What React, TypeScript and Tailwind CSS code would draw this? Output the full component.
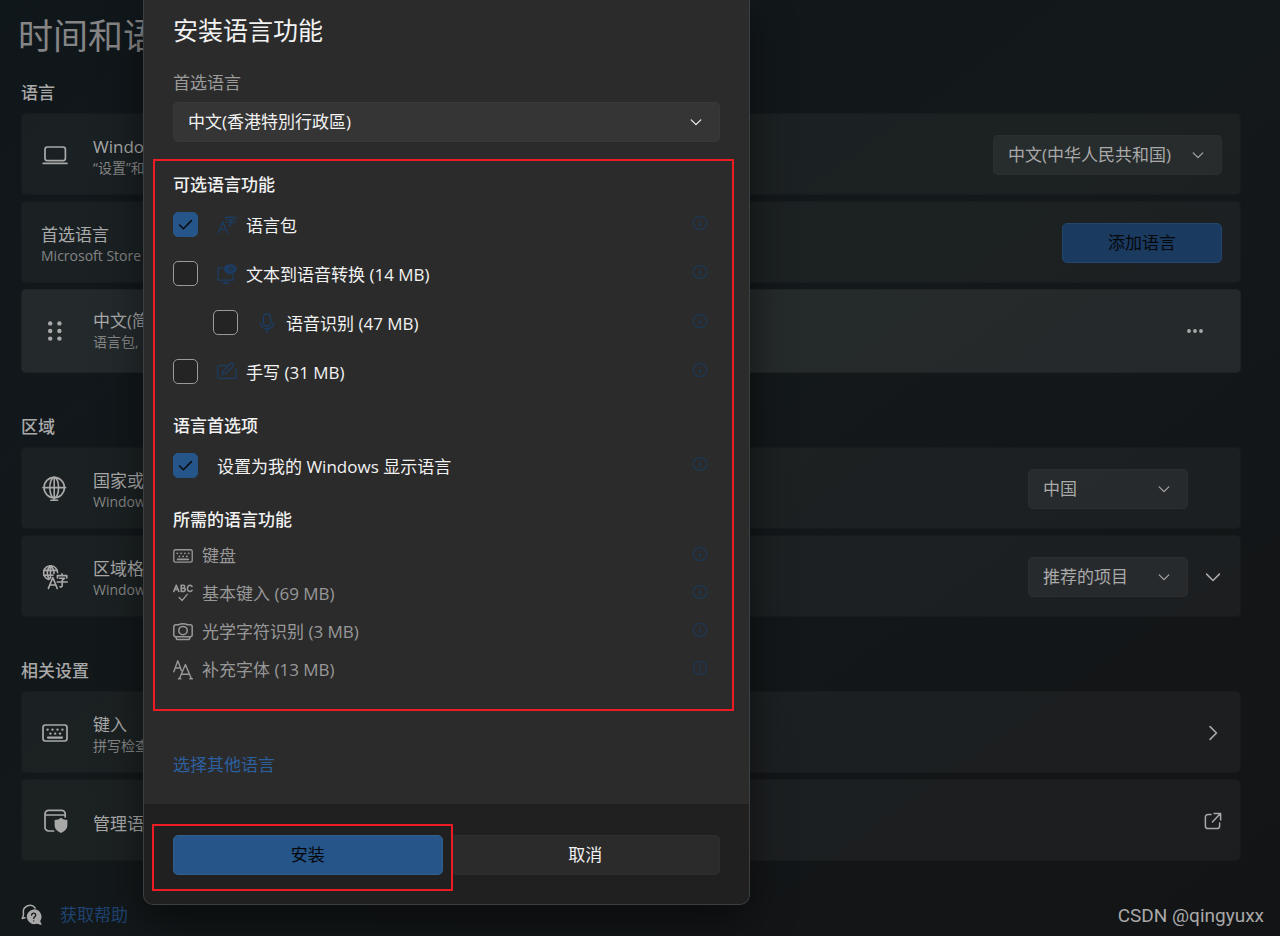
import { useState } from "react";
import type { ReactNode } from "react";

type IconProps = { className?: string };

const Chevron = ({ className = "" }: IconProps) => (
    <svg viewBox="0 0 12 12" className={className} fill="none" stroke="currentColor" strokeWidth="1.2" strokeLinecap="round" strokeLinejoin="round">
        <path d="M1.2 3.800 6 8.600l4.800-4.800" />
    </svg>
);

const LaptopIcon = () => (
    <svg viewBox="0 0 26 26" className="size-[26px]" fill="none" stroke="currentColor" strokeWidth="1.7" strokeLinecap="round">
        <rect x="3" y="5" width="20.400" height="13.600" rx="2.400" />
        <path d="M1.2 21.400h23.800" />
    </svg>
);

const GripIcon = () => (
    <svg viewBox="0 0 26 26" className="size-[26px]" fill="currentColor">
        {[5.4, 13, 20.6].map((y) => (
            <g key={y}>
                <circle cx="8.2" cy={y} r="2.2" />
                <circle cx="17.4" cy={y} r="2.2" />
            </g>
        ))}
    </svg>
);

const GlobeStandIcon = () => (
    <svg viewBox="0 0 26 26" className="size-[26px]" fill="none" stroke="currentColor" strokeWidth="1.6" strokeLinecap="round">
        <circle cx="12.2" cy="11.6" r="10.2" />
        <ellipse cx="12.2" cy="11.6" rx="4.4" ry="10.2" />
        <path d="M1 11.6h22.6M12.2 1.4v22.4M8.8 24.2h6.8" />
    </svg>
);

const GlobeTextIcon = () => (
    <svg viewBox="0 0 26 26" className="size-[26px]" fill="none" stroke="currentColor" strokeWidth="1.6" strokeLinecap="round" strokeLinejoin="round">
        <path d="M15.6 8.600a7 7 0 1 0-9 6.900" />
        <path d="M8.400 2c-4 3-4 10.200-.8 13M8.600 2c2.600 1.900 3.400 4.800 3.400 7.600M2 6.400h13M1.700 11.200h9.300M8.500 2v12" />
        <path d="M6.400 24.400 10.800 13.600l4.400 10.800M7.800 21h6" />
        <path d="M20 9.800v1.600M15.400 14v-2.400h9.400V14M17.400 14.200h5.200l-2.400 2.200v5.400c0 1-.8 1.200-2.200 1M15.200 18h10" />
    </svg>
);

const KeyboardIcon = ({ className = "" }: IconProps) => (
    <svg viewBox="0 0 26 18" className={className} fill="none" stroke="currentColor" strokeWidth="1.7" strokeLinecap="round">
        <rect x="1" y="1" width="24" height="16" rx="2.4" />
        <path d="M6 13.600h14" strokeWidth="2.2" />
        <path d="M5.600 5.600h.01M10.500 5.600h.01M15.500 5.600h.01M20.400 5.600h.01M8.400 9.600h.01M13.200 9.600h.01M18 9.600h.01" strokeWidth="2.4" />
    </svg>
);

const ShieldWindowIcon = () => (
    <svg viewBox="0 0 26 26" className="size-[26px]" fill="none" stroke="currentColor" strokeWidth="1.7" strokeLinecap="round">
        <path d="M11.600 23H6.600A3.600 3.600 0 0 1 3 19.400V6a3.600 3.600 0 0 1 3.600-3.600h13A3.600 3.600 0 0 1 23.200 6v3M3 7h20" />
        <path d="M19 9.800c1.800 1.500 3.600 2.200 6.400 2.300v5c0 3.800-2.600 6.400-6.400 7.900-3.800-1.500-6.400-4.100-6.400-7.900v-5c2.800-.1 4.600-.8 6.400-2.300z" fill="currentColor" stroke="none" />
    </svg>
);

const HelpIcon = () => (
    <svg viewBox="0 0 22 22" className="size-[22px]" fill="none" stroke="currentColor" strokeWidth="1.5" strokeLinecap="round">
        <path d="M1.200 14.400c.8-1.200 1.400-2.600 1.300-5A6.600 6.600 0 0 1 14.200 4M1.200 14.400l2.800-.6" />
        <path d="M12.400 5.400a7.400 7.400 0 1 0 3.400 14.300l5 1.400-1.600-4.200A7.400 7.400 0 0 0 12.400 5.400z" fill="currentColor" stroke="none" />
        <path d="M10.600 11.200c0-2.700 4.100-2.600 4.100 0 0 1.400-2 1.500-2 3.200M12.700 16.900v.01" stroke="#14181a" strokeWidth="1.300" />
    </svg>
);

const OpenIcon = () => (
    <svg viewBox="0 0 18 18" className="size-[18px]" fill="none" stroke="currentColor" strokeWidth="1.5" strokeLinecap="round" strokeLinejoin="round">
        <path d="M7 2.400H4A2.600 2.600 0 0 0 1.400 5v9A2.600 2.600 0 0 0 4 16.600h9a2.600 2.600 0 0 0 2.600-2.600v-3" />
        <path d="M10 1.400h6.600V8M16.400 1.600 8.400 10" />
    </svg>
);

const LanguagePackIcon = () => (
    <svg viewBox="0 0 20 20" className="size-5" fill="none" stroke="currentColor" strokeWidth="1.3" strokeLinecap="round" strokeLinejoin="round">
        <path d="M1.200 18 5.800 7 10.400 18M2.800 14.400h6" />
        <path d="M13.600.8v1.400M8.800 4V2.300h9.800V4M11 4.600h5.200l-2.600 2v3.200c0 .8-.6 1-2 .9M8.800 7.200h9.800" />
    </svg>
);

const SpeechIcon = () => (
    <svg viewBox="0 0 20 20" className="size-5" fill="none" stroke="currentColor" strokeWidth="1.3" strokeLinecap="round" strokeLinejoin="round">
        <path d="M6 4.200H1v12h15.200V10M5.800 19h6M8.800 16.400V19" />
        <path d="M12.900.2h.4a6.400 4.800 0 0 1 0 9.600l-1.900 1.600-.6-2A6.400 4.800 0 0 1 12.900.2z" fill="currentColor" stroke="none" />
        <path d="M12 4.200v1.600l1.800 1.400V2.800zM16 3.800v2.400" stroke="#2b2b2b" strokeWidth=".8" />
    </svg>
);

const MicIcon = () => (
    <svg viewBox="0 0 20 20" className="size-5" fill="none" stroke="currentColor" strokeWidth="1.400" strokeLinecap="round">
        <rect x="6.400" y=".8" width="7.200" height="12.400" rx="3.600" />
        <path d="M3.400 9.600a6.600 6.600 0 0 0 13.200 0M10 16.400v3" />
    </svg>
);

const PenIcon = () => (
    <svg viewBox="0 0 20 20" className="size-5" fill="none" stroke="currentColor" strokeWidth="1.300" strokeLinecap="round" strokeLinejoin="round">
        <path d="M9.600 3.600H2.400A1.600 1.600 0 0 0 .8 5.200v9.600a1.600 1.600 0 0 0 1.600 1.600h15.200a1.600 1.600 0 0 0 1.600-1.600V7" />
        <path d="m5.200 12.400.8-3.400L13.400 1.600A1.800 1.800 0 0 1 16 4.200L8.600 11.600z" />
    </svg>
);

const SpellIcon = () => (
    <svg viewBox="0 0 20 20" className="size-5" fill="none" stroke="currentColor" strokeWidth="1.600" strokeLinecap="round" strokeLinejoin="round">
        <path d="M.8 7.400 3.300 1.200 5.800 7.400M1.700 5.400h3.200M8.200 1.200v6.200h2.200c2.400 0 2.400-3.200 0-3.200H8.200h2c2 0 2-3 0-3zM19 2.400c-1.600-2-4.600-1.200-4.600 2s3 3.900 4.600 2" />
        <path d="m6.200 13.400 3 3 5-6" strokeWidth="1.400" />
    </svg>
);

const OcrIcon = () => (
    <svg viewBox="0 0 20 20" className="size-5" fill="none" stroke="currentColor" strokeWidth="1.500" strokeLinecap="round" strokeLinejoin="round">
        <path d="M2.800 2.800h2.600Q10 .6 14.600 2.800h2.600a2 2 0 0 1 2 2v8a2 2 0 0 1-2 2H2.800a2 2 0 0 1-2-2v-8a2 2 0 0 1 2-2z" />
        <circle cx="10" cy="8.600" r="4.200" />
        <path d="M3 15.400c.2 1.400.8 2.200 2 2.200h10c1.200 0 1.800-.8 2-2.200" />
    </svg>
);

const FontIcon = () => (
    <svg viewBox="0 0 20 20" className="size-5" fill="none" stroke="currentColor" strokeWidth="1.400" strokeLinecap="round" strokeLinejoin="round">
        <path d="M.8 11.800 4.800.8l3.600 9.800M2.400 8h4.600M6.400 18.800 12.400 4.400l6 14.400M8.400 14.200h8M5.400 18.800h2.400M16.800 18.800h2.600" />
    </svg>
);

const InfoButton = ({ label }: { label: string }) => (
    <button type="button" aria-label={label} className="mb-1 ml-auto text-[#1d3855]">
        <svg viewBox="0 0 16 16" className="size-4" fill="none" stroke="currentColor" strokeWidth="1.2">
            <circle cx="8" cy="8" r="6.700" />
            <path d="M8 7v4.400M8 4.400v1.400" strokeWidth="1.6" />
        </svg>
    </button>
);

interface DropdownProps {
    id: string;
    label: string;
    value: string;
    className: string;
}

const Dropdown = ({ id, label, value, className }: DropdownProps) => (
    <div className={`relative ${className}`}>
        <select id={id} aria-label={label} className="h-10 w-full appearance-none rounded-[5px] border border-white/2 bg-white/5 pr-12 pl-3.5 text-[17px]">
            <option>{value}</option>
        </select>
        <Chevron className="pointer-events-none absolute top-3.5 right-[18px] size-3" />
    </div>
);

interface CardProps {
    icon?: ReactNode;
    title: string;
    description?: string;
    active?: boolean;
    children?: ReactNode;
}

const Card = ({ icon, title, description, active, children }: CardProps) => (
    <div className={`flex items-center rounded-[5px] border border-black/10 pr-[18px] pl-[19px] ${active ? "min-h-[84px] bg-white/8" : "min-h-[82px] bg-white/4 pt-0.5"}`}>
        {icon && <span className="mr-6 flex w-7 justify-center">{icon}</span>}
        <div className={active ? "mr-auto" : "mr-auto pt-1"}>
            <p className="text-[17px] leading-[21px]">{title}</p>
            {description && <p className="text-[14px] leading-[21px] text-[#858585]">{description}</p>}
        </div>
        {children}
    </div>
);

const features = [
    { id: "pack", name: "语言包", icon: <LanguagePackIcon />, nested: false },
    { id: "tts", name: "文本到语音转换 (14 MB)", icon: <SpeechIcon />, nested: false },
    { id: "speech", name: "语音识别 (47 MB)", icon: <MicIcon />, nested: true },
    { id: "ink", name: "手写 (31 MB)", icon: <PenIcon />, nested: false },
];

const required = [
    { name: "键盘", icon: <KeyboardIcon className="w-5" /> },
    { name: "基本键入 (69 MB)", icon: <SpellIcon /> },
    { name: "光学字符识别 (3 MB)", icon: <OcrIcon /> },
    { name: "补充字体 (13 MB)", icon: <FontIcon /> },
];

interface CheckProps {
    id: string;
    checked: boolean;
    onChange: () => void;
}

const Check = ({ id, checked, onChange }: CheckProps) => (
    <span className="relative flex">
        <input
            id={id}
            type="checkbox"
            checked={checked}
            onChange={onChange}
            className="size-[25px] appearance-none rounded-[5px] border border-[#9a9a9a] bg-[#242424] checked:border-[#265689] checked:bg-[#265689]"
        />
        {checked && (
            <svg viewBox="0 0 25 25" className="pointer-events-none absolute inset-0 size-[25px]" fill="none" stroke="#0b0d10" strokeWidth="1.6" strokeLinecap="round" strokeLinejoin="round">
                <path d="m6.600 13 3.800 3.800 8-8.200" />
            </svg>
        )}
    </span>
);

const InstallDialog = () => {
    const [selected, setSelected] = useState<string[]>(["pack", "display"]);

    const toggle = (id: string) => {
        setSelected(selected.includes(id) ? selected.filter((s) => s !== id) : [...selected, id]);
    };

    return (
        <div role="dialog" aria-labelledby="dialog-title" className="w-full max-w-[607px] overflow-hidden rounded-b-[10px] border border-t-0 border-[#3c3f41] bg-[#2b2b2b] text-[17px] leading-6 text-[#f2f2f2] shadow-[0_16px_40px_rgba(0,0,0,0.5)]">
            <div className="px-[29px] pt-3 pb-[27px]">
                <h2 id="dialog-title" className="text-[25px] leading-9">安装语言功能</h2>
                <label htmlFor="preferred" className="mt-[23px] block text-[#9b9b9b]">首选语言</label>
                <Dropdown id="preferred" label="首选语言" value="中文(香港特別行政區)" className="mt-[7px]" />

                <section className="mt-[17px] -mr-3.5 -ml-5 border-2 border-[#ed1c24] pt-3 pr-6 pb-5 pl-[18px]">
                    <h3 className="font-medium">可选语言功能</h3>
                    <ul className="mt-[3px]">
                        {features.map((f) => (
                            <li key={f.id} className={`flex h-[49px] items-center ${f.nested ? "pl-10" : ""}`}>
                                <Check id={f.id} checked={selected.includes(f.id)} onChange={() => toggle(f.id)} />
                                <label htmlFor={f.id} className="flex items-center pt-0.5 pl-[19px]">
                                    <span className="mr-[9px] pb-0.5 text-[#1c3d63]">{f.icon}</span>
                                    {f.name}
                                </label>
                                <InfoButton label={f.name} />
                            </li>
                        ))}
                    </ul>

                    <h3 className="mt-[18px] font-medium">语言首选项</h3>
                    <div className="mt-[3px] flex h-[49px] items-center">
                        <Check id="display" checked={selected.includes("display")} onChange={() => toggle("display")} />
                        <label htmlFor="display" className="pt-0.5 pl-[19px]">设置为我的 Windows 显示语言</label>
                        <InfoButton label="显示语言" />
                    </div>

                    <h3 className="mt-[18px] font-medium">所需的语言功能</h3>
                    <ul className="mt-[5px] text-[#989898]">
                        {required.map((r) => (
                            <li key={r.name} className="flex h-[38px] items-center">
                                <span className="mr-[9px]">{r.icon}</span>
                                {r.name}
                                <InfoButton label={r.name} />
                            </li>
                        ))}
                    </ul>
                </section>

                <a href="#languages" className="mt-[42px] inline-block align-top text-[#2c5f9e]">选择其他语言</a>
            </div>

            <div className="grid grid-cols-2 gap-2 bg-[#202020] px-[29px] pt-[31px] pb-[29px]">
                <div className="relative">
                    <button type="button" className="h-10 w-full rounded-[5px] border border-[#31608f] bg-[#265689] text-[#050709]">安装</button>
                    <span className="pointer-events-none absolute -top-[11px] -right-2.5 -bottom-4 -left-[21px] border-2 border-[#ed1c24]" />
                </div>
                <button type="button" className="h-10 rounded-[5px] border border-white/2 bg-white/5">取消</button>
            </div>
        </div>
    );
};

export default function App() {
    return (
        <div className="relative min-h-screen overflow-hidden bg-linear-to-br from-[#10171b] via-[#13181a] to-[#131416] font-['Open_Sans','Noto_Sans_CJK_SC',sans-serif] text-[#a9a9a9]">
            <main className="pt-3 pr-[39px] pl-[21px]">
                <h1 className="-ml-[3px] text-[35px] leading-[48px] text-[#858585]">时间和语</h1>

                <h2 className="mt-[21px] text-[17px] leading-6 font-medium">语言</h2>
                <div className="mt-2 flex flex-col gap-1.5">
                    <Card icon={<LaptopIcon />} title="Windows 显示语言" description="“设置”和">
                        <Dropdown id="display-language" label="Windows 显示语言" value="中文(中华人民共和国)" className="w-[229px]" />
                    </Card>
                    <Card title="首选语言" description="Microsoft Store">
                        <button type="button" className="h-10 w-40 rounded-[5px] border border-[#23466d] bg-[#1b3a60] text-[17px] text-[#05080b]">添加语言</button>
                    </Card>
                    <Card active icon={<GripIcon />} title="中文(简体" description="语言包,">
                        <button type="button" aria-label="更多" className="flex w-[54px] justify-center">
                            <svg viewBox="0 0 18 6" className="w-[18px]" fill="currentColor">
                                <circle cx="3" cy="3" r="1.9" />
                                <circle cx="9" cy="3" r="1.9" />
                                <circle cx="15" cy="3" r="1.9" />
                            </svg>
                        </button>
                    </Card>
                </div>

                <h2 className="mt-[42px] text-[17px] leading-6 font-medium">区域</h2>
                <div className="mt-2 flex flex-col gap-1.5">
                    <Card icon={<GlobeStandIcon />} title="国家或地区" description="Windows">
                        <Dropdown id="country" label="国家或地区" value="中国" className="mr-[34px] w-40" />
                    </Card>
                    <Card icon={<GlobeTextIcon />} title="区域格式" description="Windows">
                        <Dropdown id="format" label="区域格式" value="推荐的项目" className="w-40" />
                        <button type="button" aria-label="展开" className="ml-4 flex w-[18px] justify-center">
                            <Chevron className="size-4" />
                        </button>
                    </Card>
                </div>

                <h2 className="mt-[42px] text-[17px] leading-6 font-medium">相关设置</h2>
                <div className="mt-2 flex flex-col gap-1.5">
                    <Card icon={<KeyboardIcon className="w-[26px]" />} title="键入" description="拼写检查">
                        <button type="button" aria-label="键入" className="flex w-[18px] justify-center">
                            <Chevron className="size-4 -rotate-90" />
                        </button>
                    </Card>
                    <Card icon={<ShieldWindowIcon />} title="管理语言">
                        <button type="button" aria-label="管理语言">
                            <OpenIcon />
                        </button>
                    </Card>
                </div>

                <div className="mt-[42px] flex items-center pb-2">
                    <HelpIcon />
                    <a href="#help" className="ml-[17px] text-[17px] leading-6 text-[#1f4370]">获取帮助</a>
                </div>
            </main>

            <div className="absolute inset-0 flex items-start pl-[143px]">
                <InstallDialog />
            </div>
            <p className="absolute right-4 bottom-1.5 font-['Roboto',sans-serif] text-[19px] leading-7">CSDN @qingyuxx</p>
        </div>
    );
}
